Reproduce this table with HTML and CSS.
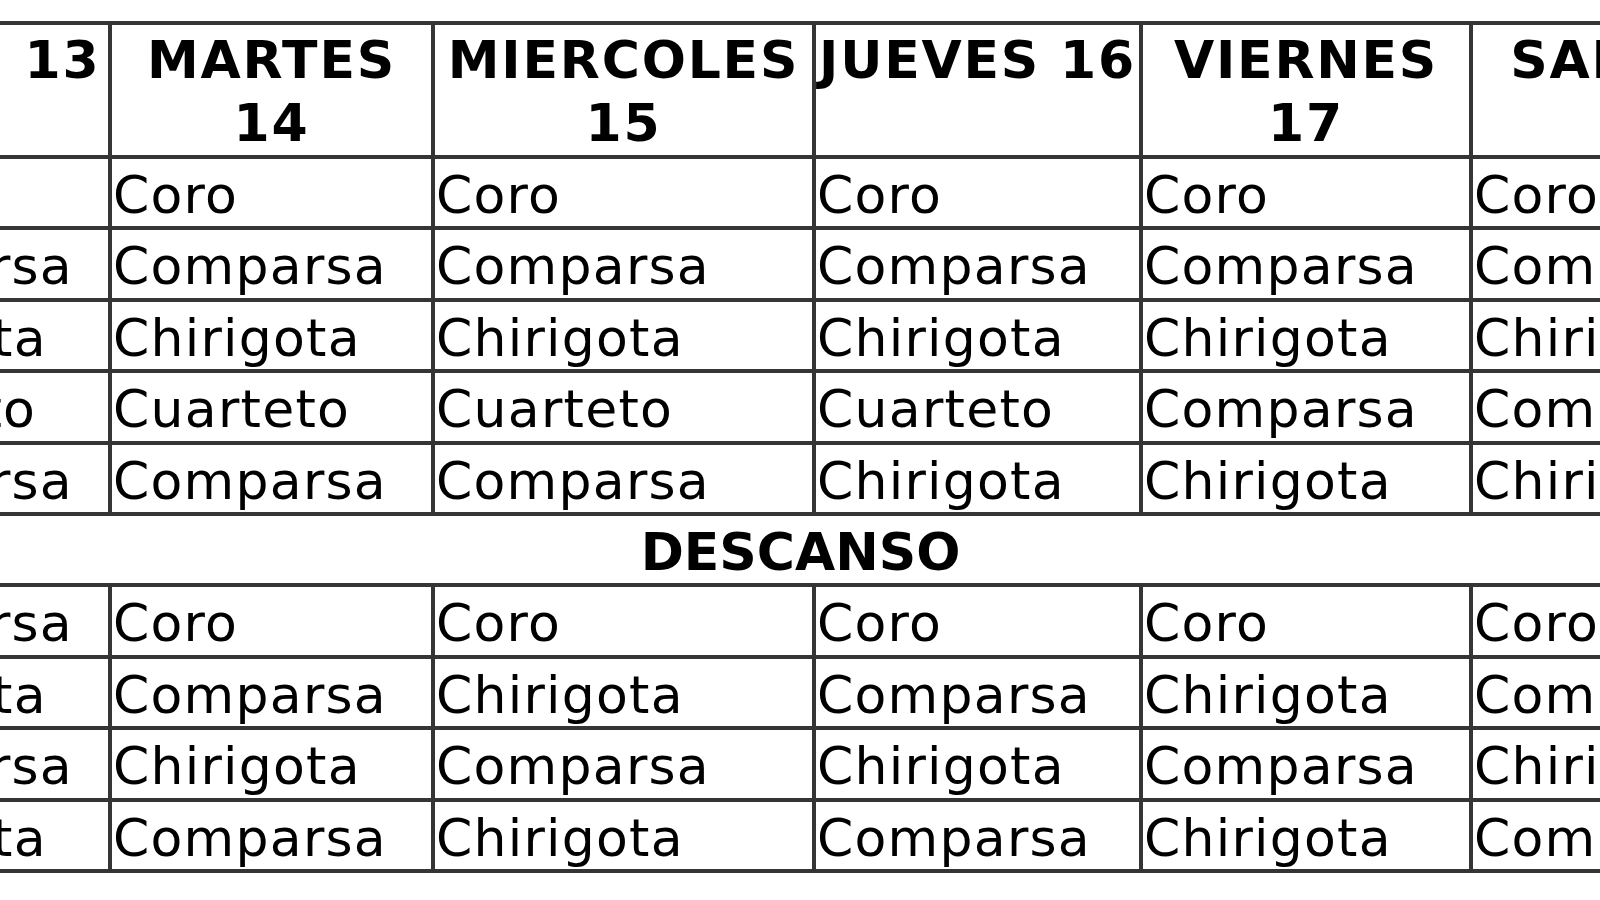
FILE: index.html
```html
<!DOCTYPE html>
<html lang="es">
<head>
<meta charset="utf-8">
<title>Calendario</title>
<link rel="stylesheet" href="styles.css">
</head>
<body>
<table class="schedule">
  <colgroup>
    <col class="c-lun"><col class="c-mar"><col class="c-mie"><col class="c-jue"><col class="c-vie"><col class="c-sab">
  </colgroup>
  <thead>
    <tr>
      <th>LUNES 13</th>
      <th>MARTES<br>14</th>
      <th>MIERCOLES<br>15</th>
      <th>JUEVES 16</th>
      <th>VIERNES<br>17</th>
      <th>SABADO<br>18</th>
    </tr>
  </thead>
  <tbody>
    <tr><td>Coro</td><td>Coro</td><td>Coro</td><td>Coro</td><td>Coro</td><td>Coro</td></tr>
    <tr><td>Comparsa</td><td>Comparsa</td><td>Comparsa</td><td>Comparsa</td><td>Comparsa</td><td>Comparsa</td></tr>
    <tr><td>Chirigota</td><td>Chirigota</td><td>Chirigota</td><td>Chirigota</td><td>Chirigota</td><td>Chirigota</td></tr>
    <tr><td>Cuarteto</td><td>Cuarteto</td><td>Cuarteto</td><td>Cuarteto</td><td>Comparsa</td><td>Comparsa</td></tr>
    <tr><td>Comparsa</td><td>Comparsa</td><td>Comparsa</td><td>Chirigota</td><td>Chirigota</td><td>Chirigota</td></tr>
    <tr><td class="break" colspan="6">DESCANSO</td></tr>
    <tr><td>Comparsa</td><td>Coro</td><td>Coro</td><td>Coro</td><td>Coro</td><td>Coro</td></tr>
    <tr><td>Chirigota</td><td>Comparsa</td><td>Chirigota</td><td>Comparsa</td><td>Chirigota</td><td>Comparsa</td></tr>
    <tr><td>Comparsa</td><td>Chirigota</td><td>Comparsa</td><td>Chirigota</td><td>Comparsa</td><td>Chirigota</td></tr>
    <tr><td>Chirigota</td><td>Comparsa</td><td>Chirigota</td><td>Comparsa</td><td>Chirigota</td><td>Comparsa</td></tr>
  </tbody>
</table>
</body>
</html>
```

FILE: styles.css
```css
html, body {
  margin: 0;
  padding: 0;
  background: #ffffff;
  overflow: hidden;
}

body {
  font-family: "DejaVu Sans", Verdana, sans-serif;
  color: #000000;
}

.schedule {
  border-collapse: collapse;
  table-layout: fixed;
  width: 2009px;
  margin: 21px 0 0 -206px;
  font-size: 52px;
}

.c-lun { width: 314px; }
.c-mar { width: 323px; }
.c-mie { width: 381px; }
.c-jue { width: 327px; }
.c-vie { width: 330px; }
.c-sab { width: 334px; }

.schedule th,
.schedule td {
  border: 4px solid #353535;
  white-space: nowrap;
  overflow: hidden;
}

.schedule th {
  font-weight: bold;
  text-align: center;
  vertical-align: top;
  line-height: 63px;
  padding: 4px 0 0;
  letter-spacing: 1.8px;
}

.schedule td {
  text-align: left;
  vertical-align: top;
  line-height: 62.4px;
  padding: 5px 1px 0;
  letter-spacing: 1.25px;
}

.schedule td.break {
  font-weight: bold;
  text-align: center;
  letter-spacing: 0;
}
```
